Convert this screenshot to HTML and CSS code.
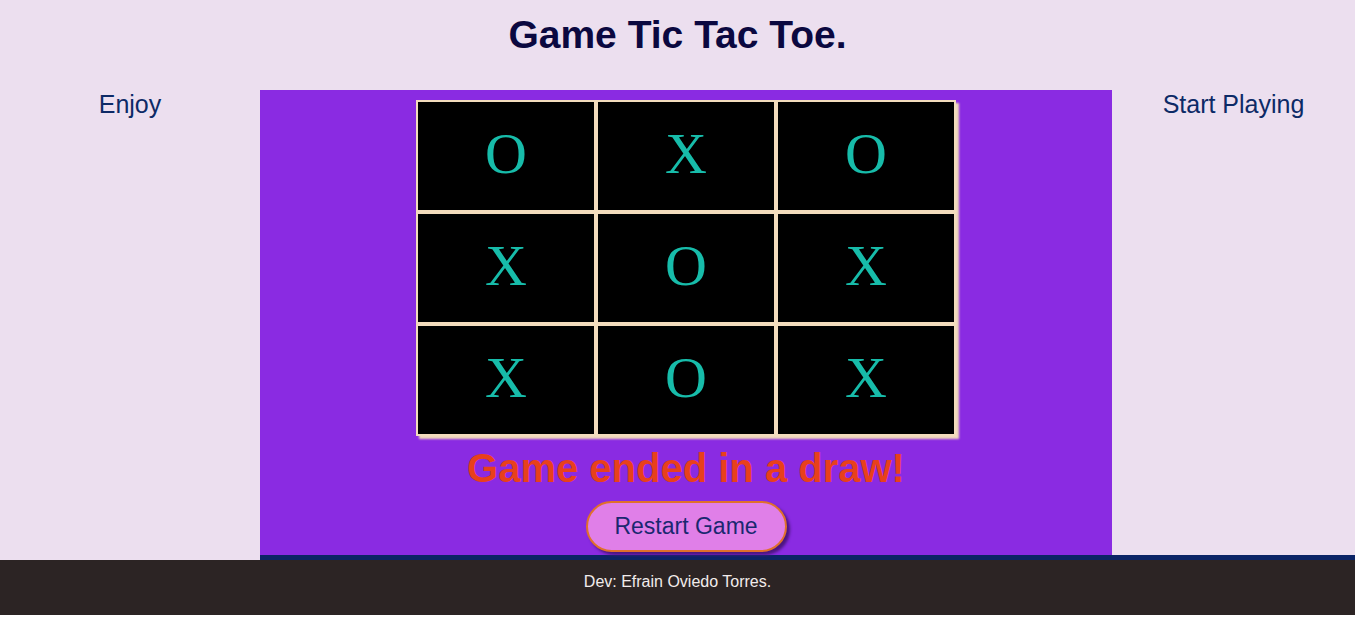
FILE: index.html
```html
<!DOCTYPE html>
<html lang="en">
<head>
<meta charset="utf-8">
<title>Game Tic Tac Toe</title>
<link rel="stylesheet" href="styles.css">
</head>
<body>
<div class="page">
  <header class="header">
    <h1 class="title">Game Tic Tac Toe.</h1>
  </header>
  <div class="row">
    <aside class="side side-left"><p class="side-text">Enjoy</p></aside>
    <main class="main">
      <div class="board">
        <div class="cell">O</div>
        <div class="cell">X</div>
        <div class="cell">O</div>
        <div class="cell">X</div>
        <div class="cell">O</div>
        <div class="cell">X</div>
        <div class="cell">X</div>
        <div class="cell">O</div>
        <div class="cell">X</div>
      </div>
      <h2 class="status">Game ended in a draw!</h2>
      <button class="restart">Restart Game</button>
    </main>
    <aside class="side side-right"><p class="side-text">Start Playing</p></aside>
  </div>
  <footer class="footer">Dev: Efrain Oviedo Torres.</footer>
</div>
</body>
</html>
```

FILE: styles.css
```css
html, body {
  margin: 0;
  padding: 0;
  background: #ffffff;
}

.page {
  width: 1355px;
  background: #ecdfef;
  font-family: "Liberation Sans", Arial, sans-serif;
}

.header {
  height: 90px;
  box-sizing: border-box;
  padding-top: 13px;
}

.title {
  margin: 0;
  text-align: center;
  font-size: 39px;
  font-weight: bold;
  color: #0b0840;
}

.row {
  display: flex;
  align-items: stretch;
}

.side {
  box-sizing: border-box;
}

.side-left {
  width: 260px;
}

.side-right {
  flex: 1;
  border-bottom: 5px solid #0b2466;
}

.side-text {
  margin: 0;
  text-align: center;
  font-size: 25px;
  line-height: 29px;
  color: #0d2a66;
}

.main {
  width: 852px;
  height: 470px;
  box-sizing: border-box;
  background: #8a2be2;
  border-bottom: 5px solid #0b2466;
  display: flex;
  flex-direction: column;
  align-items: center;
  padding-top: 10px;
}

.board {
  display: grid;
  grid-template-columns: repeat(3, 180px);
  grid-template-rows: repeat(3, 112px);
  box-shadow: 3px 3px 2px #f0d9bc;
}

.cell {
  box-sizing: border-box;
  border: 2px solid #f3dcbd;
  background: #000000;
  color: #17bcaa;
  font-family: "Liberation Serif", "Times New Roman", serif;
  font-size: 58px;
  display: flex;
  align-items: center;
  justify-content: center;
  padding-bottom: 6px;
}

.status {
  margin: 9px 0 0;
  font-size: 40px;
  font-weight: bold;
  color: #e8401c;
  line-height: 46px;
}

.restart {
  margin-top: 10px;
  width: 201px;
  height: 51px;
  border: 2px solid #e0702a;
  border-radius: 26px;
  background: #e07fe8;
  color: #1a2870;
  font-family: "Liberation Sans", Arial, sans-serif;
  font-size: 23px;
  box-shadow: 3px 3px 3px #4b1680;
  padding: 0;
}

.footer {
  height: 55px;
  background: #2c2424;
  color: #f2ecec;
  font-size: 16px;
  text-align: center;
  line-height: 44px;
}
```
